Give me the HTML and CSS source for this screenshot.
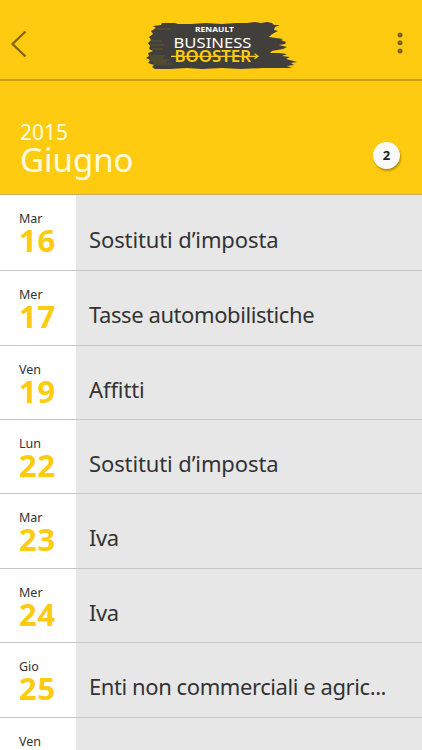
FILE: index.html
```html
<!DOCTYPE html>
<html lang="it">
<head>
    <meta charset="UTF-8">
    <meta name="viewport" content="width=device-width, initial-scale=1.0">
    <title>Renault Business Booster</title>
    <link rel="stylesheet" href="styles.css">
</head>
<body>
    <!-- Top bar -->
    <header class="topbar">
        <a href="#" class="back" aria-label="Indietro">
            <svg width="18" height="28" viewBox="0 0 18 28">
                <path d="M15.500 1.500 L2.500 14 L15.500 26.500" fill="none" stroke="#7d6208" stroke-width="2.200"/>
            </svg>
        </a>
        <svg class="logo" width="160" height="54" viewBox="0 0 160 54">
            <path class="brush" d="M16 3 L17 1 L30 1 L33 2 L46 2 L61 1 L77 2 L91 1 L102 1 L110 0 L116 1 L122 0 L127 1 L129 3 L135 3 L130 5 L129 8 L133 9 L129 11 L126 13 L124 15 L131 16 L138 17 L136 18 L141 20 L140 22 L134 23 L142 25 L138 27 L127 29 L125 31 L134 31 L142 32 L137 34 L145 35 L141 37 L152 40 L146 41 L149 43 L142 44 L147 46 L136 46 L118 46 L96 47 L77 46 L57 47 L42 46 L25 47 L10 47 L7 45 L9 43 L3 41 L5 38 L1 36 L4 34 L3 31 L8 29 L4 27 L5 24 L3 21 L6 18 L4 15 L8 12 L6 9 L11 6 L8 4 Z"/>
            <path class="streaks" d="M6 19 H17 M5 23 H20 M7 27 H18 M5 34 H20 M6 38 H24 M9 42 H27 M12 7 H26 M5 36 H18 M8 40 H22"/>
            <text class="logo-brand" x="50" y="10.200" textLength="39" lengthAdjust="spacingAndGlyphs">RENAULT</text>
            <text class="logo-top" x="28.500" y="25.700" textLength="78" lengthAdjust="spacingAndGlyphs">BUSINESS</text>
            <text class="logo-bottom" x="29.500" y="39.500" textLength="76.500" lengthAdjust="spacingAndGlyphs">BOOSTER</text>
            <path class="arrow" d="M26 34.300 H113 M109.500 31.800 L113 34.300 L109.500 36.800"/>
        </svg>
        <a href="#" class="menu" aria-label="Menu">
            <svg width="6" height="22" viewBox="0 0 6 22" fill="#7d6208">
                <circle cx="3" cy="3" r="2.500"/>
                <circle cx="3" cy="10.800" r="2.500"/>
                <circle cx="3" cy="19" r="2.500"/>
            </svg>
        </a>
    </header>

    <!-- Current month -->
    <section class="month">
        <div>
            <p class="year">2015</p>
            <h1>Giugno</h1>
        </div>
        <span class="count">2</span>
    </section>

    <!-- Deadlines -->
    <ul class="deadlines">
        <li class="row">
            <div class="date"><span class="day">Mar</span><span class="num">16</span></div>
            <p class="title wide">Sostituti d’imposta</p>
        </li>
        <li class="row">
            <div class="date"><span class="day">Mer</span><span class="num">17</span></div>
            <p class="title">Tasse automobilistiche</p>
        </li>
        <li class="row">
            <div class="date"><span class="day">Ven</span><span class="num">19</span></div>
            <p class="title wide">Affitti</p>
        </li>
        <li class="row">
            <div class="date"><span class="day">Lun</span><span class="num">22</span></div>
            <p class="title wide">Sostituti d’imposta</p>
        </li>
        <li class="row">
            <div class="date"><span class="day">Mar</span><span class="num">23</span></div>
            <p class="title">Iva</p>
        </li>
        <li class="row">
            <div class="date"><span class="day">Mer</span><span class="num">24</span></div>
            <p class="title">Iva</p>
        </li>
        <li class="row">
            <div class="date"><span class="day">Gio</span><span class="num">25</span></div>
            <p class="title">Enti non commerciali e agric...</p>
        </li>
        <li class="row last">
            <div class="date"><span class="day">Ven</span></div>
        </li>
    </ul>
</body>
</html>
```

FILE: styles.css
```css
:root {
    --yellow: #ffcb10;
    --yellow-dark: #c99f14;
    --grey: #e7e7e7;
    --line: #c6c6c6;
    --text: #333333;
}

* {
    margin: 0;
    padding: 0;
    box-sizing: border-box;
}

body {
    width: 422px;
    height: 750px;
    overflow: hidden;
    font-family: 'Noto Sans', 'Open Sans', sans-serif;
    color: var(--text);
    background: var(--grey);
    display: flex;
    flex-direction: column;
}

/* Top bar */
.topbar {
    flex: none;
    height: 81px;
    padding: 0 19px 0 10px;
    display: flex;
    background: var(--yellow);
    border-bottom: 2px solid var(--yellow-dark);
}

.back {
    width: 34px;
    padding-top: 30px;
}

.menu {
    width: 34px;
    margin-left: auto;
    padding-top: 32px;
    text-align: right;
}

.back svg,
.menu svg {
    display: inline-block;
    vertical-align: top;
}

/* Logo */
.logo {
    margin: 22px 0 0 101px;
    font-family: 'Noto Sans', sans-serif;
}

.brush {
    fill: #413f3b;
}

.streaks {
    fill: none;
    stroke: #8b731f;
    stroke-width: 0.8;
    opacity: 0.6;
}

.logo-brand {
    font-size: 6.3px;
    font-weight: 700;
    fill: #ffffff;
}

.logo-top {
    font-size: 15px;
    fill: #ffffff;
}

.logo-bottom {
    font-size: 15.4px;
    font-weight: 600;
    fill: var(--yellow);
}

.arrow {
    fill: none;
    stroke: var(--yellow);
    stroke-width: 1.2;
}

/* Month */
.month {
    flex: none;
    height: 114px;
    padding: 38px 22px 0 20px;
    display: flex;
    justify-content: space-between;
    background: var(--yellow);
    border-bottom: 1px solid #c5b268;
    color: #fffbe0;
}

.year {
    font-size: 21px;
    line-height: 26px;
}

h1 {
    font-size: 33px;
    font-weight: 400;
    line-height: 34px;
    margin-top: -2px;
}

.count {
    width: 27px;
    height: 27px;
    margin-top: 23px;
    border-radius: 50%;
    background: #fafafa;
    box-shadow: 1px 2px 2px rgba(90, 70, 0, 0.45);
    color: #222222;
    font-size: 13px;
    font-weight: 700;
    line-height: 27px;
    text-align: center;
}

/* Deadline list */
.deadlines {
    list-style: none;
}

.row {
    height: 74px;
    display: flex;
    border-bottom: 1px solid var(--line);
}

.row:nth-child(2),
.row:nth-child(5),
.row:nth-child(7) {
    height: 75px;
}

.row:first-child {
    height: 76px;
}

.date {
    flex: none;
    width: 76px;
    padding-left: 19px;
    background: #ffffff;
    display: flex;
    flex-direction: column;
}

.day {
    margin-top: 15px;
    font-size: 12.5px;
    line-height: 18px;
}

.num {
    font-size: 31px;
    font-weight: 700;
    line-height: 24px;
    letter-spacing: 0.7px;
    color: var(--yellow);
}

.title {
    flex: 1;
    padding-left: 13px;
    font-size: 22px;
    line-height: 86px;
    height: 73px;
    letter-spacing: -0.42px;
    white-space: nowrap;
}

.row:first-child .title {
    padding-top: 1px;
}

.wide {
    letter-spacing: -0.12px;
}

/* The list carries on below the screen */
.last {
    height: 32px;
    border-bottom: none;
}
```
